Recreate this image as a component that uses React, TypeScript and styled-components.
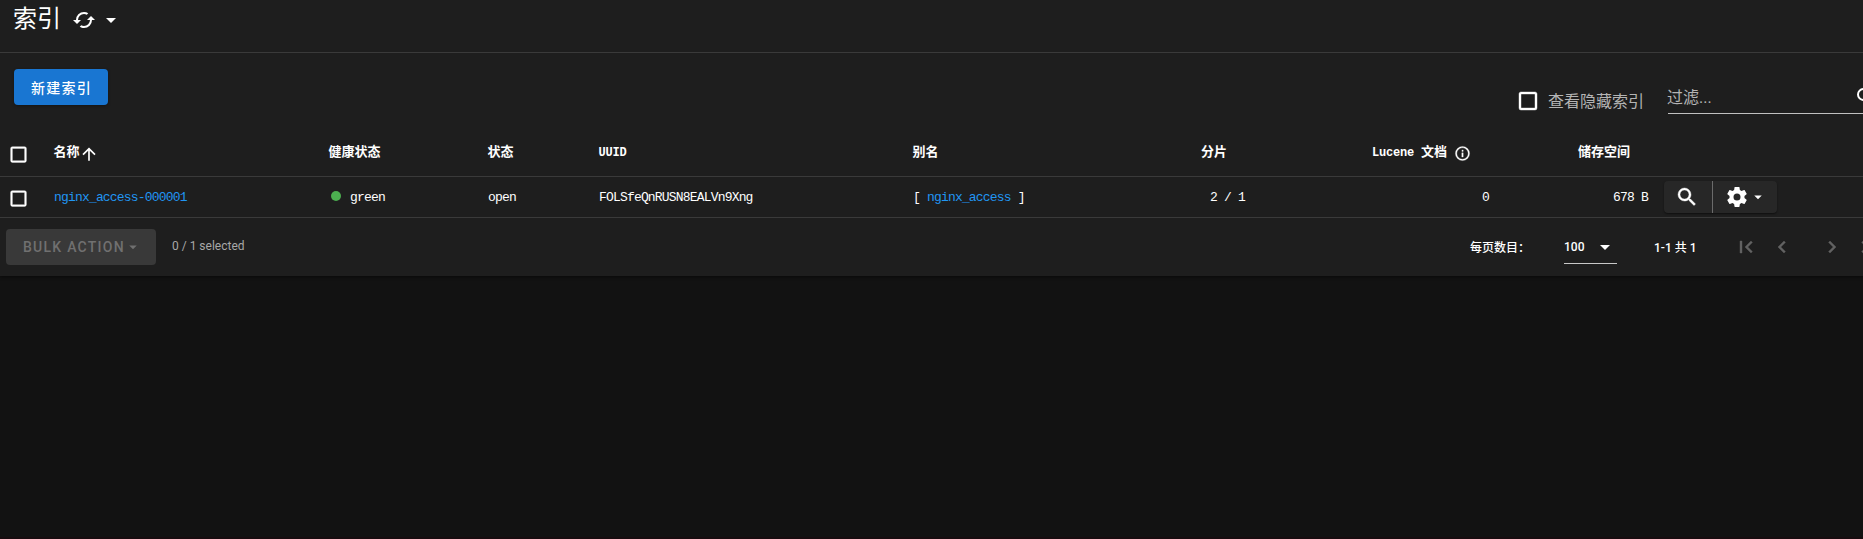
import React from 'react';
import styled, { createGlobalStyle } from 'styled-components';

const GlobalStyle = createGlobalStyle`
  * { box-sizing: border-box; }
  body {
    margin: 0;
    background: #121212;
    color: #fff;
    font-family: Roboto, 'Noto Sans CJK SC', sans-serif;
    overflow: hidden;
  }
`;

const paths = {
  cached:
    'M19,8L15,12H18A6,6 0 0,1 12,18C11,18 10.03,17.75 9.2,17.3L7.74,18.76C8.97,19.54 10.43,20 12,20A8,8 0 0,0 20,12H23M6,12A6,6 0 0,1 12,6C13,6 13.97,6.25 14.8,6.7L16.26,5.24C15.03,4.46 13.57,4 12,4A8,8 0 0,0 4,12H1L5,16L9,12',
  menuDown: 'M7,10L12,15L17,10H7Z',
  checkbox:
    'M19,3H5C3.89,3 3,3.89 3,5V19A2,2 0 0,0 5,21H19A2,2 0 0,0 21,19V5C21,3.89 20.1,3 19,3M19,5V19H5V5H19Z',
  magnify:
    'M9.5,3A6.5,6.5 0 0,1 16,9.5C16,11.11 15.41,12.59 14.44,13.73L14.71,14H15.5L20.5,19L19,20.5L14,15.5V14.71L13.73,14.44C12.59,15.41 11.11,16 9.5,16A6.5,6.5 0 0,1 3,9.5A6.5,6.5 0 0,1 9.5,3M9.5,5C7,5 5,7 5,9.5C5,12 7,14 9.5,14C12,14 14,12 14,9.5C14,7 12,5 9.5,5Z',
  cog:
    'M12,15.5A3.5,3.5 0 0,1 8.5,12A3.5,3.5 0 0,1 12,8.5A3.5,3.5 0 0,1 15.5,12A3.5,3.5 0 0,1 12,15.5M19.43,12.97C19.47,12.65 19.5,12.33 19.5,12C19.5,11.67 19.47,11.34 19.43,11L21.54,9.37C21.73,9.22 21.78,8.95 21.66,8.73L19.66,5.27C19.54,5.05 19.27,4.96 19.05,5.05L16.56,6.05C16.04,5.66 15.5,5.32 14.87,5.07L14.5,2.42C14.46,2.18 14.25,2 14,2H10C9.75,2 9.54,2.18 9.5,2.42L9.13,5.07C8.5,5.32 7.96,5.66 7.44,6.05L4.95,5.05C4.73,4.96 4.46,5.05 4.34,5.27L2.34,8.73C2.21,8.95 2.27,9.22 2.46,9.37L4.57,11C4.53,11.34 4.5,11.67 4.5,12C4.5,12.33 4.53,12.65 4.57,12.97L2.46,14.63C2.27,14.78 2.21,15.05 2.34,15.27L4.34,18.73C4.46,18.95 4.73,19.03 4.95,18.95L7.44,17.94C7.96,18.34 8.5,18.68 9.13,18.93L9.5,21.58C9.54,21.82 9.75,22 10,22H14C14.25,22 14.46,21.82 14.5,21.58L14.87,18.93C15.5,18.67 16.04,18.34 16.56,17.94L19.05,18.95C19.27,19.03 19.54,18.95 19.66,18.73L21.66,15.27C21.78,15.05 21.73,14.78 21.54,14.63L19.43,12.97Z',
  arrowUp: 'M13,20H11V8L5.5,13.5L4.08,12.08L12,4.16L19.92,12.08L18.5,13.5L13,8V20Z',
  info:
    'M11,9H13V7H11M12,20C7.59,20 4,16.41 4,12C4,7.59 7.59,4 12,4C16.41,4 20,7.59 20,12C20,16.41 16.41,20 12,20M12,2A10,10 0 0,0 2,12A10,10 0 0,0 12,22A10,10 0 0,0 22,12A10,10 0 0,0 12,2M11,17H13V11H11V17Z',
  pageFirst: 'M18.41,16.59L13.82,12L18.41,7.41L17,6L11,12L17,18L18.41,16.59M6,6H8V18H6V6Z',
  pageLast: 'M5.59,7.41L10.18,12L5.59,16.59L7,18L13,12L7,6L5.59,7.41M16,6H18V18H16V6Z',
  chevronLeft: 'M15.41,16.58L10.83,12L15.41,7.41L14,6L8,12L14,18L15.41,16.58Z',
  chevronRight: 'M8.59,16.58L13.17,12L8.59,7.41L10,6L16,12L10,18L8.59,16.58Z',
};

const Svg = styled.svg<{ $bold?: boolean }>`
  display: block;
  flex: none;
  fill: currentColor;
  stroke: currentColor;
  stroke-width: ${(p) => (p.$bold ? 0.4 : 0)};
`;

type IconProps = { name: keyof typeof paths; size?: number; bold?: boolean };

const Icon = ({ name, size = 24, bold }: IconProps) => (
  <Svg $bold={bold} width={size} height={size} viewBox="0 0 24 24" aria-hidden>
    <path d={paths[name]} />
  </Svg>
);

const Page = styled.main`
  height: 539px;
  overflow: hidden;
  border-bottom: 2px solid #170c0f;
`;

const Card = styled.section`
  width: 1895px;
  height: 276px;
  background: #1e1e1e;
  box-shadow: 0 1px 3px rgba(0, 0, 0, 0.5);
`;

const TitleBar = styled.header`
  display: flex;
  align-items: center;
  height: 53px;
  padding: 0 0 13px 13px;
  border-bottom: 1px solid #3a3a3a;
`;

const Title = styled.h1`
  margin: 0 11px 1px 0;
  font-size: 24px;
  line-height: 32px;
  font-weight: 400;
`;

const RefreshButton = styled.button`
  display: flex;
  align-items: center;
  gap: 3px;
  padding: 0;
  border: 0;
  background: none;
  color: #fff;
`;

const Toolbar = styled.div`
  display: flex;
  align-items: flex-start;
  height: 77px;
  padding: 16px 0 0 14px;
`;

const CreateButton = styled.button`
  width: 94px;
  height: 36px;
  padding: 0 0 0 1px;
  border: 0;
  border-radius: 4px;
  background: #1976d2;
  color: #fff;
  font: 500 14px Roboto, 'Noto Sans CJK SC', sans-serif;
  letter-spacing: 1.25px;
  white-space: nowrap;
  box-shadow: 0 1px 3px rgba(0, 0, 0, 0.35);
`;

const HiddenToggle = styled.label`
  display: flex;
  align-items: center;
  gap: 8px;
  height: 24px;
  margin: 20px 24px 0 auto;
  color: #fff;
  font-size: 16px;
`;

const ToggleText = styled.span`
  margin-bottom: 2px;
  color: #b4b4b4;
`;

const Filter = styled.div`
  display: flex;
  align-items: center;
  justify-content: space-between;
  width: 227px;
  height: 33px;
  margin-top: 12px;
  padding-bottom: 2px;
  border-bottom: 1px solid #c0c0c0;
  font-size: 16px;
  color: #b4b4b4;

  span {
    margin: 0 0 1px -1px;
  }

  svg {
    margin: 2px 17px 0 0;
    color: #fff;
  }
`;

const Row = styled.div<{ $head?: boolean }>`
  display: grid;
  grid-template-columns: 54px 275px 159px 111px 314px 232px 100px 244px 159px 1fr;
  align-items: center;
  height: ${(p) => (p.$head ? 47 : 41)}px;
  border-bottom: 1px solid #3a3a3a;
  font-family: 'Liberation Mono', 'Noto Sans CJK SC', monospace;
  font-size: 13px;
  font-weight: ${(p) => (p.$head ? 700 : 400)};
  letter-spacing: ${(p) => (p.$head ? 0 : -0.82)}px;
  white-space: pre;
`;

const Cell = styled.div<{ $end?: boolean; $sortSpace?: boolean }>`
  display: flex;
  align-items: center;
  justify-content: ${(p) => (p.$end ? 'flex-end' : 'flex-start')};
  padding-right: ${(p) => (p.$sortSpace ? 18 : 0)}px;
`;

const HeadText = styled.span`
  height: 20px;
  line-height: 20px;
  margin: 0.5px 0 0 -0.5px;
`;

const Latin = styled.span`
  font-size: 12px;
  letter-spacing: -0.2px;
`;

const CheckCell = styled.div`
  padding: 2px 0 0 7.5px;
`;

const Link = styled.a`
  color: #2196f3;
`;

const SortMark = styled.span`
  margin: 1px 0 0 -0.5px;
`;

const InfoMark = styled.span`
  margin: 1px 0 0 7px;
`;

const Dot = styled.i`
  width: 10px;
  height: 10px;
  margin: 0 9px 2px 2px;
  border-radius: 50%;
  background: #4caf50;
`;

const Actions = styled.div`
  display: flex;
  width: 113px;
  height: 32px;
  margin-left: 16px;
  border-radius: 4px;
  background: #272727;
  box-shadow: 0 1px 2px rgba(0, 0, 0, 0.5);
`;

const ActionButton = styled.button<{ $width: number }>`
  display: flex;
  align-items: center;
  justify-content: center;
  width: ${(p) => p.$width}px;
  padding: 0 2px 0 0;
  border: 0;
  background: none;
  color: #fff;

  & + & {
    justify-content: flex-start;
    padding: 0 0 0 11.5px;
    border-left: 1px solid #6b6b6b;
  }

  & + & svg + svg {
    margin-left: -1.5px;
  }
`;

const Footer = styled.footer`
  display: flex;
  align-items: center;
  height: 58px;
  padding: 0 0 0 6px;
  font-size: 12px;
`;

const BulkButton = styled.button`
  display: flex;
  align-items: center;
  width: 150px;
  height: 36px;
  padding: 0 0 0 17px;
  border: 0;
  border-radius: 4px;
  background: #393939;
  color: #707070;
  font: 500 14px Roboto, sans-serif;
  letter-spacing: 1.25px;
  white-space: nowrap;

  svg {
    margin-left: -1px;
  }
`;

const Selected = styled.span`
  margin: 0 0 2px 16px;
  color: #a8a8a8;
`;

const Pager = styled.div`
  display: flex;
  align-items: center;
  width: 425px;
  height: 36px;
  margin-left: auto;
  font-weight: 500;
  white-space: nowrap;
`;

const PerPage = styled.span`
  width: 94px;
  margin-bottom: 2px;
`;

const Select = styled.div`
  display: flex;
  align-items: center;
  justify-content: space-between;
  width: 53px;
  height: 34px;
  margin: 0 38px 0 0;
  border-bottom: 1px solid #c8c8c8;
`;

const Range = styled.span`
  flex: none;
  width: 80px;
  margin: 0 0 2px -1px;
`;

const PageButton = styled.button<{ $gap: number }>`
  flex: none;
  margin: 0 ${(p) => p.$gap}px 0 0;
  padding: 0;
  border: 0;
  background: none;
  color: #626262;
`;

export default function App() {
  return (
    <Page>
      <GlobalStyle />
      <Card>
        <TitleBar>
          <Title>索引</Title>
          <RefreshButton aria-label="刷新">
            <Icon name="cached" />
            <Icon name="menuDown" />
          </RefreshButton>
        </TitleBar>
        <Toolbar>
          <CreateButton>新建索引</CreateButton>
          <HiddenToggle>
            <Icon name="checkbox" bold />
            <ToggleText>查看隐藏索引</ToggleText>
          </HiddenToggle>
          <Filter>
            <span>过滤...</span>
            <Icon name="magnify" />
          </Filter>
        </Toolbar>
        <Row $head>
          <CheckCell><Icon name="checkbox" size={21} bold /></CheckCell>
          <Cell>
            <HeadText>名称</HeadText>
            <SortMark><Icon name="arrowUp" size={20} /></SortMark>
          </Cell>
          <Cell><HeadText>健康状态</HeadText></Cell>
          <Cell><HeadText>状态</HeadText></Cell>
          <Cell><HeadText><Latin>UUID</Latin></HeadText></Cell>
          <Cell><HeadText>别名</HeadText></Cell>
          <Cell $end $sortSpace><HeadText>分片</HeadText></Cell>
          <Cell $end $sortSpace>
            <HeadText><Latin>Lucene </Latin>文档</HeadText>
            <InfoMark><Icon name="info" size={17} bold /></InfoMark>
          </Cell>
          <Cell $end $sortSpace><HeadText>储存空间</HeadText></Cell>
        </Row>
        <Row>
          <CheckCell><Icon name="checkbox" size={21} bold /></CheckCell>
          <Cell><Link>nginx_access-000001</Link></Cell>
          <Cell><Dot />green</Cell>
          <Cell>open</Cell>
          <Cell>FOLSfeQnRUSN8EALVn9Xng</Cell>
          <Cell>[ <Link>nginx_access</Link> ]</Cell>
          <Cell $end>2 / 1</Cell>
          <Cell $end>0</Cell>
          <Cell $end>678 B</Cell>
          <Actions>
            <ActionButton $width={48} aria-label="查看"><Icon name="magnify" bold /></ActionButton>
            <ActionButton $width={65} aria-label="设置">
              <Icon name="cog" />
              <Icon name="menuDown" size={18} />
            </ActionButton>
          </Actions>
        </Row>
        <Footer>
          <BulkButton>
            BULK ACTION
            <Icon name="menuDown" size={18} />
          </BulkButton>
          <Selected>0 / 1 selected</Selected>
          <Pager>
            <PerPage>每页数目：</PerPage>
            <Select>
              100
              <Icon name="menuDown" />
            </Select>
            <Range>1-1 共 1</Range>
            <PageButton $gap={12} aria-label="首页"><Icon name="pageFirst" bold /></PageButton>
            <PageButton $gap={26} aria-label="上一页"><Icon name="chevronLeft" bold /></PageButton>
            <PageButton $gap={12} aria-label="下一页"><Icon name="chevronRight" bold /></PageButton>
            <PageButton $gap={0} aria-label="末页"><Icon name="pageLast" bold /></PageButton>
          </Pager>
        </Footer>
      </Card>
    </Page>
  );
}
